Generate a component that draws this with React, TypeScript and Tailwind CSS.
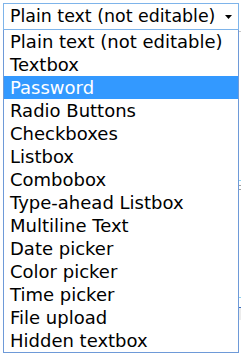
import React from "react";

const items = [
  "Plain text (not editable)",
  "Textbox",
  "Password",
  "Radio Buttons",
  "Checkboxes",
  "Listbox",
  "Combobox",
  "Type-ahead Listbox",
  "Multiline Text",
  "Date picker",
  "Color picker",
  "Time picker",
  "File upload",
  "Hidden textbox",
];

export default function App() {
  return (
    <div
      className="w-[241px] h-[355px] bg-white overflow-hidden text-black pl-[3px] pt-[3px] flex"
      style={{ fontFamily: '"DejaVu Sans", Verdana, sans-serif' }}
    >
      <div className="flex flex-col">
        <div className="w-[236px] h-[27px] border border-[#7eb4ea] flex items-center pl-[6px] pr-[6px] justify-between">
          <span className="text-[17.4px] leading-none whitespace-nowrap">Plain text (not editable)</span>
          <svg width="7" height="6" viewBox="0 0 7 6" className="shrink-0">
            <path d="M0 1 L7 1 L3.5 5 Z" fill="#000" />
          </svg>
        </div>
        <div className="w-[236px] border border-t-0 border-[#6e9ad8]">
          {items.map((it, i) => (
            <div
              key={it}
              className={
                "h-[23px] flex items-center pl-[6px] text-[18px] whitespace-nowrap " +
                (i === 2 ? "bg-[#3399ff] text-white" : "")
              }
            >
              {it}
            </div>
          ))}
        </div>
      </div>
      <div className="flex flex-col w-[2px]">
        <div className="h-[28px]" />
        <div className="h-px bg-[#c8c8c8]" />
        <div className="h-[148px]" />
        <div className="h-px bg-[#8fd3f0]" />
        <div className="h-[4px]" />
        <div className="h-px bg-[#a0a0a0]" />
        <div className="h-[3px]" />
        <div className="h-px bg-[#a0a0a0]" />
        <div className="h-[107px]" />
        <div className="h-px bg-[#8fd3f0]" />
        <div className="h-[9px]" />
        <div className="h-px bg-[#3a6fc0]" />
        <div className="h-[12px] bg-[#ececec]" />
      </div>
    </div>
  );
}
